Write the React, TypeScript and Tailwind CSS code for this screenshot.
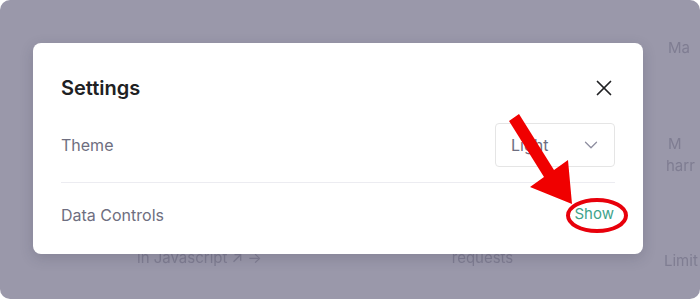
import { X, ChevronDown } from 'lucide-react';

const SettingsModal = () => {
  return (
    <div className="absolute left-[33px] top-[43px] w-[610px] h-[211px] bg-white rounded-[8px] shadow-[0_4px_14px_rgba(40,38,60,0.18)] px-[28px] pt-[31px] flex flex-col">
      <div className="flex items-center justify-between h-[28px]">
        <h2 className="text-[20px] leading-[28px] font-semibold text-[#202123]">Settings</h2>
        <button className="w-[28px] h-[28px] flex items-center justify-center text-[#202123] -mr-[3px]">
          <X size={26} strokeWidth={1.6} />
        </button>
      </div>
      <div className="mt-[21px] flex items-center justify-between h-[44px]">
        <span className="text-[16px] text-[#6e6e80]">Theme</span>
        <div className="w-[120px] h-[44px] border border-[#e5e5e5] rounded-[4px] flex items-center justify-between pl-[15px] pr-[12px]">
          <span className="text-[16px] text-[#6e6e80]">Light</span>
          <ChevronDown size={22} strokeWidth={1.4} className="text-[#8e8ea0]" />
        </div>
      </div>
      <div className="mt-[15px] h-px bg-[#ececf1]" />
      <div className="flex items-center justify-between h-[66px] pb-[3px]">
        <span className="text-[16px] text-[#6e6e80]">Data Controls</span>
        <button className="text-[15px] text-[#3fa38b] pr-[1px]">Show</button>
      </div>
    </div>
  );
};

const App = () => {
  return (
    <div className="w-[700px] h-[299px] bg-white" style={{ fontFamily: 'Inter, "Liberation Sans", sans-serif' }}>
      <div className="relative w-full h-full rounded-[10px] bg-[#9a98aa] overflow-hidden">
        {/* page behind the overlay */}
        <div className="flex h-full text-[15px] text-[#7f7d92] blur-[0.6px]">
          <div className="flex-1 flex flex-col justify-end pb-[30px]">
            <div className="flex">
              <span className="ml-[137px]">in Javascript ↗ →</span>
              <span className="ml-[190px]">requests</span>
            </div>
          </div>
          <div className="w-[32px] flex flex-col pt-[37px] pb-[27px]">
            <span>Ma</span>
            <span className="mt-[73px]">M</span>
            <span className="-ml-[2px]">harr</span>
            <span className="mt-auto -ml-[4px]">Limit</span>
          </div>
        </div>
        <SettingsModal />
        <svg className="absolute inset-0 pointer-events-none" width="700" height="299" viewBox="0 0 700 299">
          <polygon points="509,121 519,114 554,170 568,160 572,204 530,187 544,177" fill="#f00000" />
          <ellipse cx="597" cy="215.5" rx="29" ry="15.5" fill="none" stroke="#e8000b" strokeWidth="4" />
        </svg>
      </div>
    </div>
  );
};

export default App;
